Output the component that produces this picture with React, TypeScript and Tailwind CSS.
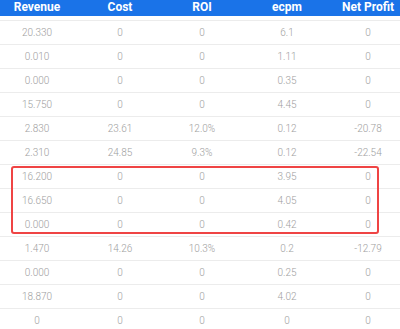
import React from 'react';

const rows = [
  ['20.330', '0', '0', '6.1', '0'],
  ['0.010', '0', '0', '1.11', '0'],
  ['0.000', '0', '0', '0.35', '0'],
  ['15.750', '0', '0', '4.45', '0'],
  ['2.830', '23.61', '12.0%', '0.12', '-20.78'],
  ['2.310', '24.85', '9.3%', '0.12', '-22.54'],
  ['16.200', '0', '0', '3.95', '0'],
  ['16.650', '0', '0', '4.05', '0'],
  ['0.000', '0', '0', '0.42', '0'],
  ['1.470', '14.26', '10.3%', '0.2', '-12.79'],
  ['0.000', '0', '0', '0.25', '0'],
  ['18.870', '0', '0', '4.02', '0'],
  ['0', '0', '0', '0', '0'],
];

const headers = ['Revenue', 'Cost', 'ROI', 'ecpm', 'Net Profit'];

export default function App() {
  return (
    <div className="relative w-[400px] h-[329px] overflow-hidden bg-white font-['Roboto',sans-serif]">
      {/* header */}
      <div className="grid grid-cols-[74px_92px_72px_98px_64px] h-[16px] bg-[#1a73e8] text-white text-[12px] leading-[14px] font-bold">
        {headers.map((h) => (
          <div key={h} className="text-center whitespace-nowrap">{h}</div>
        ))}
      </div>

      <div className="mt-[4px] border-t border-[#ececec]">
        {rows.map((r, i) => (
          <div
            key={i}
            className="grid grid-cols-[74px_92px_72px_98px_64px] h-[24px] items-center border-b border-[#ececec] text-[10px] font-light text-[#9e9e9e]"
          >
            {r.map((c, j) => (
              <div key={j} className="text-center">{c}</div>
            ))}
          </div>
        ))}
      </div>

      {/* highlight */}
      <div className="absolute left-[11px] top-[166px] w-[368px] h-[68px] border-2 border-[#ef4444] rounded-[3px] pointer-events-none" />
    </div>
  );
}
